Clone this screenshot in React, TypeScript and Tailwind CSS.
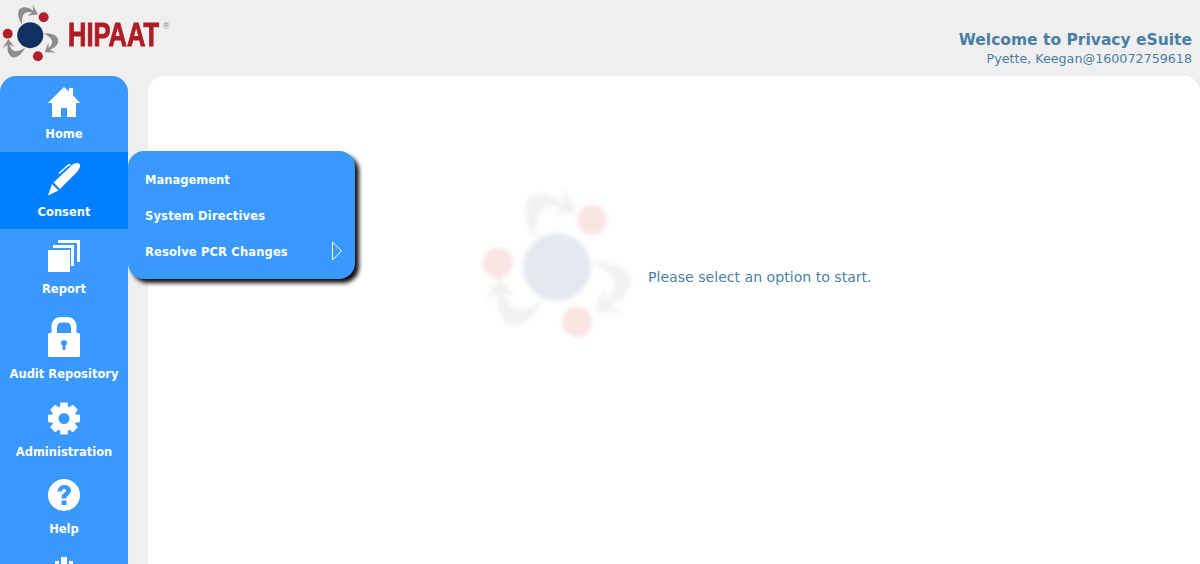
import React from "react";

const F = "font-['Verdana','DejaVu_Sans',sans-serif]";

function Swirl({ ball, dot, arrow, r }: { ball: string; dot: string; arrow: string; r: number }) {
  const arc = "M65 64C52 42 52 24 66 20C76 17 86 22 95 28L93 12L107 37L81 41L92 33C84 30 76 31 71 36C66 42 65 52 65 64z";
  return (
    <svg viewBox="0 0 170 170" className="w-full h-full">
      <path d={arc} fill={arrow} />
      <path d={arc} fill={arrow} transform="rotate(120 87 92)" />
      <path d={arc} fill={arrow} transform="rotate(240 87 92)" />
      <circle cx="122" cy="45" r={r} fill={dot} />
      <circle cx="28" cy="88" r={r} fill={dot} />
      <circle cx="107" cy="147" r={r} fill={dot} />
      <circle cx="87" cy="92" r="34" fill={ball} />
    </svg>
  );
}

const HomeIcon = () => (
  <svg viewBox="0 0 32 30" className="w-8 h-[30px]" fill="white">
    <path d="M16 0l5 4.500V1h4v7.200l7 7.800h-4v14H19v-9h-6v9H4V16H0z" />
  </svg>
);
const PenIcon = () => (
  <svg viewBox="0 0 32 34" className="w-8 h-[34px]" fill="white">
    <path d="M0 33.500L4 22l6.500 6.500z" />
    <path d="M5.500 20.500L22 5C25 1 30 0 31.500 2C33 4 31 8 28 11L12 27z" />
    <path d="M11 11.500L20 3.500l2.500-1" fill="none" stroke="white" strokeWidth="1.500" />
  </svg>
);
const ReportIcon = () => (
  <svg viewBox="0 0 32 32" className="w-8 h-8" fill="white">
    <path d="M10 0h22v22h-3V3H10z" />
    <path d="M5 5h21v21h-3V8H5z" />
    <path d="M0 10h22v22H0z" />
  </svg>
);
const LockIcon = () => (
  <svg viewBox="0 0 32 40" className="w-8 h-10" fill="white">
    <path fillRule="evenodd" d="M3.500 16V10C3.500 3 8 0 13 0h6c5 0 9.500 3 9.500 10v6H31l1 1v22l-1 1H1l-1-1V17l1-1zM9 16h14v-6c0-3-2-4.500-5-4.500h-4c-3 0-5 1.500-5 4.500z" />
    <circle cx="16" cy="26" r="3" fill="#3a99ff" />
    <path d="M14.500 26h3v7h-3z" fill="#3a99ff" />
  </svg>
);
const GearIcon = () => (
  <svg viewBox="0 0 32 33" className="w-8 h-[33px]" fill="white">
    <circle cx="16" cy="16.500" r="12" />
    {[0, 45, 90, 135, 180, 225, 270, 315].map((a) => (
      <path key={a} d="M12.500 0.500h7l1 6h-9z" transform={`rotate(${a} 16 16.500)`} />
    ))}
    <circle cx="16" cy="16.500" r="5.500" fill="#3a99ff" />
  </svg>
);
const HelpIcon = () => (
  <svg viewBox="0 0 32 32" className="w-8 h-8">
    <circle cx="16" cy="16" r="16" fill="white" />
    <path d="M9.500 12.500C10 8 13 6 16.500 6c4 0 6.500 2.500 6.500 5.500 0 2.500-1.500 3.800-3 5-1.200 1-1.500 1.500-1.500 3h-5c0-3 1-4.300 2.500-5.500 1.300-1 2-1.500 2-2.500s-.7-1.700-1.800-1.700c-1.300 0-2 1-2.200 2.500zM13.500 21.500h5V26h-5z" fill="#3a99ff" />
  </svg>
);
const BottomIcon = () => (
  <svg viewBox="0 0 32 32" className="w-8 h-8" fill="white">
    <path d="M13 0h6v14h-6z" />
    <path d="M7 4h4v5H7zM21 4h4v5h-4z" />
  </svg>
);

function NavItem({ icon, label, active, h, rounded }: { icon: React.ReactNode; label: string; active?: boolean; h: string; rounded?: boolean }) {
  return (
    <div className={`${h} shrink-0 flex flex-col items-center ${active ? "bg-[#0080ff]" : ""} ${rounded ? "rounded-t-[16px]" : ""}`}>
      {icon}
      <span className="text-[11.5px] leading-[14px] font-bold text-white whitespace-nowrap">{label}</span>
    </div>
  );
}

export default function App() {
  return (
    <div className={`${F} w-[1200px] h-[564px] overflow-hidden bg-[#efefef] relative`}>
      <header className="h-[76px] flex justify-between">
        <div className="flex items-start">
          <div className="w-[65px] h-[65px] ml-[-3px] shrink-0">
            <Swirl ball="#0e3160" dot="#b4202a" arrow="#8d8d8d" r={13} />
          </div>
          <div className="relative ml-[6px] mt-[17px] w-[95px] h-[34px]">
            <span className="block font-['Liberation_Sans',sans-serif] font-bold text-[34px] leading-[34px] text-[#b01c26] [-webkit-text-stroke:1px_#b01c26] origin-left scale-x-[0.75] w-[126px] whitespace-nowrap">HIPAAT</span>
            <span className="absolute left-[95px] top-[5px] font-['Liberation_Sans',sans-serif] text-[9px] leading-[9px] text-[#888]">®</span>
          </div>
        </div>
        <div className="text-right pr-2 pt-[31px] text-[#4a7fa5]">
          <div className="text-[15.5px] leading-[19px] font-bold">Welcome to Privacy eSuite</div>
          <div className="text-[12.7px] leading-[17px]">Pyette, Keegan@160072759618</div>
        </div>
      </header>
      <div className="flex gap-5 h-[488px]">
        <nav className="w-[128px] bg-[#3a99ff] rounded-t-[16px] overflow-hidden flex flex-col">
          <NavItem rounded h="h-[76px] pt-[11px] gap-[10px]" icon={<HomeIcon />} label="Home" />
          <NavItem active h="h-[77px] pt-[10px] gap-[9px]" icon={<PenIcon />} label="Consent" />
          <NavItem h="h-[77px] pt-[11px] gap-[10px]" icon={<ReportIcon />} label="Report" />
          <NavItem h="h-[85px] pt-[11px] gap-[10px]" icon={<LockIcon />} label="Audit Repository" />
          <NavItem h="h-[77px] pt-[11px] gap-[10px]" icon={<GearIcon />} label="Administration" />
          <NavItem h="h-[77px] pt-[11px] gap-[11px]" icon={<HelpIcon />} label="Help" />
          <div className="shrink-0 flex justify-center pt-[12px]"><BottomIcon /></div>
        </nav>
        <main className="flex-1 bg-white rounded-t-[16px] flex items-start">
          <div className="w-[170px] h-[170px] ml-[322px] mt-[99px] blur-[2px] shrink-0">
            <Swirl ball="#e5e9ef" dot="#fae3e3" arrow="#f1f1f1" r={15} />
          </div>
          <p className="ml-2 mt-[192px] text-[14.1px] leading-[18px] text-[#4a7fa5] whitespace-nowrap">Please select an option to start.</p>
        </main>
      </div>
      <div className="absolute left-[128px] top-[151px] w-[227px] h-[128px] rounded-[16px] bg-[#3a99ff] shadow-[4px_4px_4px_#111] flex flex-col pl-[17px] pt-[12px]">
        <div className="h-[36px] flex items-center text-[11.5px] font-bold text-white whitespace-nowrap">Management</div>
        <div className="h-[36px] flex items-center text-[11.5px] tracking-[0.17px] font-bold text-white whitespace-nowrap">System Directives</div>
        <div className="h-[36px] flex items-center text-[11.5px] tracking-[0.16px] font-bold text-white whitespace-nowrap">Resolve PCR Changes</div>
        <svg viewBox="0 0 12 20" className="absolute left-[203px] top-[90px] w-3 h-5" fill="none" stroke="white" strokeWidth="1">
          <path d="M1.500 1v18l9-9z" />
        </svg>
      </div>
    </div>
  );
}
